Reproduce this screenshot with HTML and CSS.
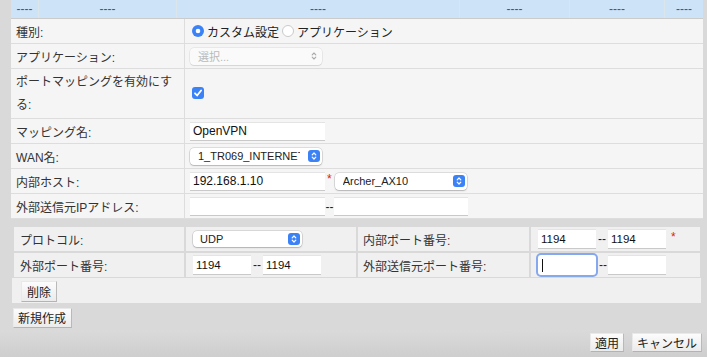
FILE: index.html
```html
<!DOCTYPE html>
<html lang="ja">
<head>
<meta charset="utf-8">
<title>ポートマッピング</title>
<link rel="stylesheet" href="styles.css">
</head>
<body>
<div class="wrap">
  <div class="hdr">
    <span>----</span><span>----</span><span>----</span><span>----</span><span>----</span><span>----</span>
  </div>

  <div class="form">
    <div class="lbl">種別:</div>
    <div class="val">
      <span class="radio on"><svg width="12" height="12" viewBox="0 0 12 12"><circle cx="6" cy="6" r="6" fill="#3b82f6"/><circle cx="6" cy="6" r="2.3" fill="#fff"/></svg></span>
      <span class="rlabel">カスタム設定</span>
      <span class="radio"><svg width="12" height="12" viewBox="0 0 12 12"><circle cx="6" cy="6" r="5.5" fill="#fff" stroke="#c9c9c9"/></svg></span>
      <span class="rlabel">アプリケーション</span>
    </div>

    <div class="lbl">アプリケーション:</div>
    <div class="val">
      <div class="sel dis"><span class="txt">選択...</span>
        <svg width="12" height="12" viewBox="0 0 12 12"><path d="M4.2 4.8 6 3 7.8 4.8M4.2 7.2 6 9 7.8 7.2" fill="none" stroke="#a9a9a9" stroke-width="1.1" stroke-linecap="round" stroke-linejoin="round"/></svg>
      </div>
    </div>

    <div class="lbl tall">ポートマッピングを有効にする:</div>
    <div class="val">
      <span class="check"><svg width="12" height="12" viewBox="0 0 12 12"><rect width="12" height="12" rx="3" fill="#3b82f6"/><path d="M3 6.3 5.1 8.5 9.1 3.5" fill="none" stroke="#fff" stroke-width="1.8" stroke-linecap="round" stroke-linejoin="round"/></svg></span>
    </div>

    <div class="lbl">マッピング名:</div>
    <div class="val"><input class="in" type="text" value="OpenVPN"></div>

    <div class="lbl">WAN名:</div>
    <div class="val">
      <div class="sel wan"><span class="txt">1_TR069_INTERNET</span>
        <svg width="12" height="12" viewBox="0 0 12 12"><rect width="12" height="12" rx="3" fill="#3b82f6"/><path d="M4.2 4.8 6 3 7.8 4.8M4.2 7.2 6 9 7.8 7.2" fill="none" stroke="#fff" stroke-width="1.2" stroke-linecap="round" stroke-linejoin="round"/></svg>
      </div>
    </div>

    <div class="lbl">内部ホスト:</div>
    <div class="val">
      <input class="in" type="text" value="192.168.1.10"><span class="req">*</span>
      <div class="sel host"><span class="txt">Archer_AX10</span>
        <svg width="12" height="12" viewBox="0 0 12 12"><rect width="12" height="12" rx="3" fill="#3b82f6"/><path d="M4.2 4.8 6 3 7.8 4.8M4.2 7.2 6 9 7.8 7.2" fill="none" stroke="#fff" stroke-width="1.2" stroke-linecap="round" stroke-linejoin="round"/></svg>
      </div>
    </div>

    <div class="lbl">外部送信元IPアドレス:</div>
    <div class="val">
      <input class="in" type="text" value=""><span class="dash">--</span><input class="in in2" type="text" value="">
    </div>
  </div>

  <div class="ports">
    <div class="plbl">プロトコル:</div>
    <div class="pval">
      <div class="sel udp"><span class="txt">UDP</span>
        <svg width="12" height="12" viewBox="0 0 12 12"><rect width="12" height="12" rx="3" fill="#3b82f6"/><path d="M4.2 4.8 6 3 7.8 4.8M4.2 7.2 6 9 7.8 7.2" fill="none" stroke="#fff" stroke-width="1.2" stroke-linecap="round" stroke-linejoin="round"/></svg>
      </div>
    </div>
    <div class="plbl">内部ポート番号:</div>
    <div class="pval">
      <input class="pin" type="text" value="1194"><span class="pdash">--</span><input class="pin" type="text" value="1194"><span class="req preq">*</span>
    </div>

    <div class="plbl">外部ポート番号:</div>
    <div class="pval">
      <input class="pin" type="text" value="1194"><span class="pdash">--</span><input class="pin" type="text" value="1194">
    </div>
    <div class="plbl">外部送信元ポート番号:</div>
    <div class="pval">
      <span class="fwrap"><input class="pin focus" type="text" value=""><span class="caret"></span></span><span class="pdash tight">--</span><input class="pin" type="text" value="">
    </div>
  </div>

  <div class="del"><button class="btn b-del" type="button">削除</button></div>
  <div class="new"><button class="btn b-new" type="button">新規作成</button></div>
</div>

<div class="footer">
  <button class="btn b-ok" type="button">適用</button>
  <button class="btn b-cancel" type="button">キャンセル</button>
</div>
</body>
</html>
```

FILE: styles.css
```css
* { box-sizing: border-box; }

html, body {
  margin: 0;
  padding: 0;
}

body {
  width: 707px;
  height: 357px;
  overflow: hidden;
  background: #d9d9d9;
  font-family: "Liberation Sans", "Noto Sans CJK JP", sans-serif;
  font-size: 12px;
  color: #333;
}

.wrap {
  margin-left: 11px;
  width: 692px;
}

/* header row */
.hdr {
  display: grid;
  grid-template-columns: 27px 138px 283px 110px 95px 39px;
  height: 19px;
  background: #cde3f8;
  border-bottom: 1px solid #cbcbcb;
}
.hdr span {
  display: flex;
  align-items: center;
  justify-content: center;
  border-left: 1px solid #dde5ec;
  color: #555;
  font-size: 12px;
}
.hdr span:first-child { border-left: 0; }

/* main form */
.form {
  display: grid;
  grid-template-columns: 173px 1fr;
  grid-template-rows: 24px 24px 49px 24px 24px 24px 24px;
  gap: 1px;
  padding-bottom: 1px;
  background: #dddddd;
}
.form > div {
  background: #f5f5f5;
  display: flex;
  align-items: center;
}
.lbl {
  padding: 0 8px 0 5px;
  color: #333;
}
.lbl.tall { line-height: 23px; }
.val { padding-left: 5px; }

.radio { display: flex; margin-left: 2px; }
.radio + .rlabel { margin-left: 3px; }
.rlabel + .radio { margin-left: 3px; }
.rlabel { color: #222; }

.check { display: flex; margin-left: 2px; margin-top: -2px; }

.in {
  width: 135px;
  height: 19px;
  border: 0;
  border-top: 1px solid #e4e4e4;
  border-bottom: 1px solid #c9c9c9;
  background: #fff;
  padding: 0 3px;
  font: 12px "Liberation Sans", sans-serif;
  color: #111;
  outline: none;
}
.in2 { width: 134px; }

.req {
  color: #e02020;
  font-size: 12px;
  margin: -4px 3px 0 2px;
}
.dash {
  width: 9px;
  text-align: center;
  color: #222;
  margin-top: 1px;
}

/* select look-alike */
.sel {
  display: flex;
  align-items: center;
  width: 132px;
  height: 17px;
  padding: 0 2px 0 8px;
  background: #fff;
  border-radius: 4px;
  box-shadow: 0 0 0 0.5px rgba(0,0,0,0.2), 0 1px 1.5px rgba(0,0,0,0.18);
  font: 11px "Liberation Sans", "Noto Sans CJK JP", sans-serif;
  color: #222;
}
.sel .txt {
  flex: 1;
  min-width: 0;
  overflow: hidden;
  white-space: nowrap;
}
.sel svg { flex: none; margin-left: 6px; }
.sel.wan svg { margin-left: 8px; }
.sel.dis {
  background: #fafafa;
  box-shadow: 0 0 0 0.5px rgba(0,0,0,0.1), 0 1px 1px rgba(0,0,0,0.08);
  color: #b9b9b9;
}
.sel.udp { width: 109px; height: 16px; padding-left: 7px; }

/* ports table */
.ports {
  display: grid;
  grid-template-columns: 170px 170px 171px 169px;
  grid-template-rows: 24px 24px;
  gap: 2px;
  margin: 8px 3px 0;
}
.ports > div {
  background: #f0f0f0;
  display: flex;
  align-items: center;
}
.plbl { padding-left: 6px; color: #333; }
.ports .plbl:nth-child(4n+3) { padding-left: 5px; }
.pval { padding-left: 7px; }

.pin {
  width: 58px;
  height: 20px;
  border: 0;
  border-top: 1px solid #e4e4e4;
  border-bottom: 1px solid #c9c9c9;
  background: #fff;
  padding: 0 3px;
  font: 11.5px "Liberation Sans", sans-serif;
  color: #111;
  outline: none;
}
.pdash {
  width: 12px;
  text-align: center;
  color: #222;
}
.pdash.tight { width: 12px; text-align: left; padding-left: 3px; }
.preq { margin: -4px 0 0 5px; }

.fwrap {
  position: relative;
  display: flex;
}
.pin.focus {
  border: 0;
  border-radius: 3px;
  box-shadow: 0 0 0 2px #86a8ee;
}
.caret {
  position: absolute;
  left: 4px;
  top: 4px;
  width: 1px;
  height: 13px;
  background: #111;
}

.del {
  margin: 1px 2px 0 1px;
  height: 25px;
  background: #f0f0f0;
  padding: 3px 0 0 9px;
}
.new {
  height: 27px;
  padding: 5px 0 0 2px;
}

/* buttons */
.btn {
  display: inline-block;
  margin: 0;
  font: 12px "Noto Sans CJK JP", sans-serif;
  color: #222;
  background: linear-gradient(#fcfcfc, #ebebeb);
  border: 1px solid;
  border-color: #e9e9e9 #b9b9b9 #b3b3b3 #e9e9e9;
  border-radius: 0;
  padding: 0 5px;
  height: 21px;
  line-height: 19px;
}
.b-new { padding: 0 5px 0 4px; height: 20px; line-height: 18px; }
.b-ok { padding: 0 4px; height: 19px; line-height: 17px; }
.b-cancel { padding: 0 4px; height: 19px; line-height: 17px; margin-left: 8px; }

.footer {
  height: 27px;
  padding: 3px 5px 0 0;
  display: flex;
  justify-content: flex-end;
  align-items: flex-start;
  background: linear-gradient(#dadada, #cecece);
}
```
